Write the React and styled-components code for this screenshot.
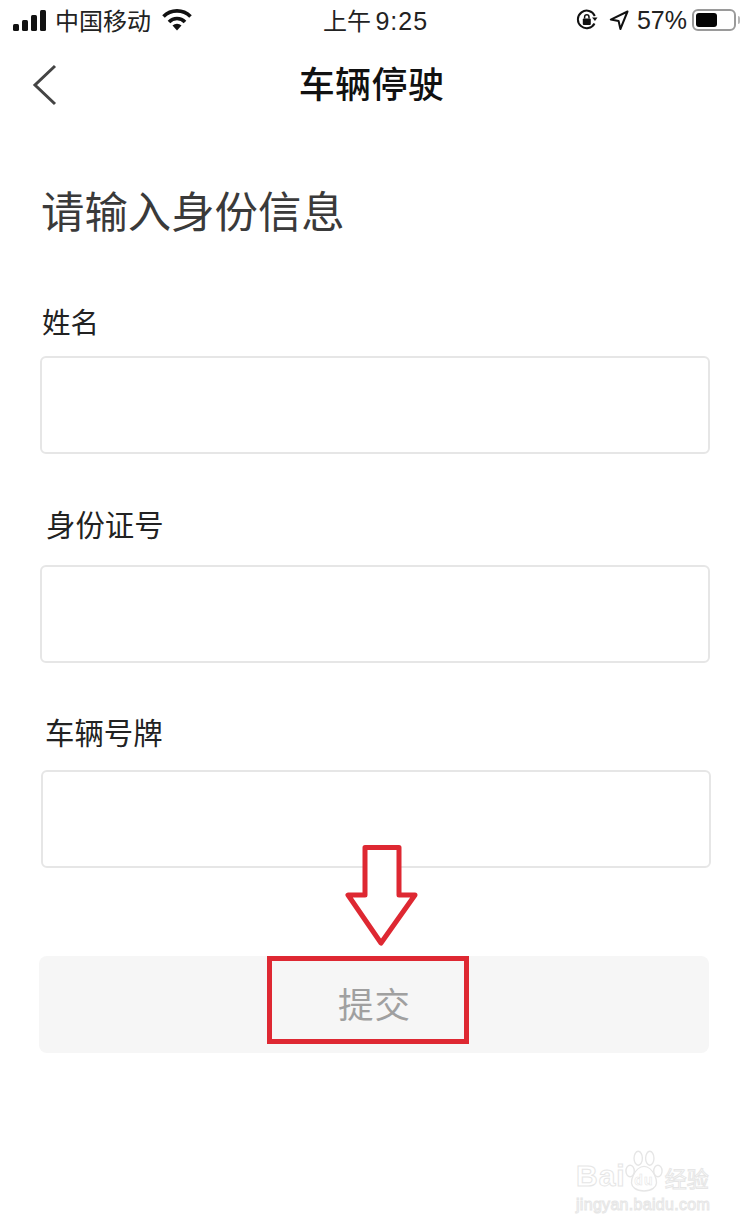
import React from "react";
import styled, { createGlobalStyle } from "styled-components";

const CJK = `"Noto Sans CJK SC", "Liberation Sans", sans-serif`;

const Global = createGlobalStyle`
  html, body { margin: 0; padding: 0; background: #fff; }
  * { box-sizing: border-box; }
`;

const Page = styled.div`
  position: relative;
  width: 750px;
  height: 1228px;
  background: #fff;
  overflow: hidden;
  font-family: ${CJK};
  display: flex;
  flex-direction: column;
`;

const StatusBar = styled.div`
  height: 42px;
  padding: 0 0 2px 13px;
  display: grid;
  grid-template-columns: 310px 126px 1fr;
  align-items: center;
  color: #111;
`;

const StatusLeft = styled.div`
  display: flex;
  align-items: center;
`;

const StatusRight = styled.div`
  display: flex;
  align-items: center;
  justify-content: flex-end;
  padding-right: 10px;
`;

const Carrier = styled.span`
  font-size: 24px;
  line-height: 30px;
  margin-left: 8px;
  margin-right: 11px;
  color: #222;
`;

const Clock = styled.span`
  font-size: 24px;
  line-height: 30px;
  color: #222;
  word-spacing: -1px;
  white-space: nowrap;
`;

const ClockDigits = styled.span`
  font-family: "Liberation Sans", sans-serif;
  font-size: 25px;
  letter-spacing: 1px;
`;

const Percent = styled.span`
  font-family: "Liberation Sans", sans-serif;
  font-size: 25px;
  line-height: 30px;
  color: #222;
  margin: 0 5px 0 8px;
`;

const Battery = styled.div`
  width: 44px;
  height: 22px;
  border: 2px solid #9a9a9a;
  border-radius: 6px;
  padding: 2px;
  margin-right: 2px;
`;

const BatteryFill = styled.div`
  width: 58%;
  height: 100%;
  background: #050505;
  border-radius: 3px;
`;

const BatteryCap = styled.div`
  width: 2px;
  height: 8px;
  background: #b5b5b5;
  border-radius: 0 2px 2px 0;
`;

const NavBar = styled.div`
  position: relative;
  height: 86px;
  padding: 0 7px 6px 0;
  display: flex;
  align-items: center;
  justify-content: center;
`;

const BackIcon = styled.svg`
  position: absolute;
  left: 31px;
  top: 22px;
`;

const NavTitle = styled.h1`
  margin: 0;
  font-size: 36px;
  line-height: 44px;
  font-weight: 500;
  letter-spacing: 0.4px;
  color: #111;
`;

const Form = styled.div`
  display: flex;
  flex-direction: column;
  padding-top: 52px;
`;

const Heading = styled.h2`
  margin: 0 0 0 41px;
  font-size: 43.4px;
  line-height: 58px;
  font-weight: 400;
  color: #3a3a3a;
`;

const Label = styled.label`
  display: block;
  margin-left: ${(p) => p.$x}px;
  margin-top: ${(p) => p.$top}px;
  font-size: ${(p) => p.$size}px;
  line-height: 40px;
  color: #222;
`;

const Field = styled.div`
  margin-left: ${(p) => p.$x}px;
  margin-top: ${(p) => p.$top}px;
  width: 670px;
  height: 98px;
  border: 2px solid #e6e6e6;
  border-radius: 6px;
  background: #fff;
`;

const Submit = styled.button`
  display: flex;
  align-items: center;
  justify-content: center;
  margin-left: 39px;
  margin-top: 88px;
  width: 670px;
  height: 97px;
  border: 0;
  border-radius: 8px;
  background: #f6f6f6;
  color: #a0a0a0;
  font-family: ${CJK};
  font-size: 35.5px;
  letter-spacing: 1px;
  padding: 0 0 4px 1px;
`;

const Highlight = styled.div`
  position: absolute;
  left: 267px;
  top: 956px;
  width: 202px;
  height: 88px;
  border: 5px solid #de2832;
`;

const Arrow = styled.svg`
  position: absolute;
  left: 340px;
  top: 840px;
`;

const Watermark = styled.div`
  position: absolute;
  left: 576px;
  top: 1149px;
  width: 140px;
  color: #fff;
  -webkit-text-stroke: 1px #e6e6e6;
  font-family: "Liberation Sans", sans-serif;
`;

const WmTop = styled.div`
  display: flex;
  align-items: flex-end;
  height: 44px;
  font-size: 30px;
  line-height: 34px;
  font-weight: 700;
  letter-spacing: 1px;
`;

const WmCjk = styled.span`
  font-family: ${CJK};
  font-size: 22px;
  line-height: 32px;
  letter-spacing: 0;
  font-weight: 400;
  margin-left: 1px;
`;

const WmUrl = styled.div`
  font-size: 16px;
  line-height: 20px;
  margin-top: 2px;
  letter-spacing: 0.3px;
  white-space: nowrap;
`;

const Paw = styled.svg`
  flex: none;
  margin: 0 0 0 -2px;
`;

function Signal() {
  return (
    <svg width="34" height="21" viewBox="0 0 34 21">
      <rect x="0" y="14" width="6" height="7" rx="1.5" fill="#111" />
      <rect x="9" y="10" width="6" height="11" rx="1.5" fill="#111" />
      <rect x="18" y="5" width="6" height="16" rx="1.5" fill="#111" />
      <rect x="27" y="0" width="6" height="21" rx="1.5" fill="#111" />
    </svg>
  );
}

function Wifi() {
  return (
    <svg width="30" height="22" viewBox="0 0 30 22">
      <path d="M1.5 7.5 A19 19 0 0 1 28.5 7.5" fill="none" stroke="#111" strokeWidth="3.6" />
      <path d="M7 13 A11 11 0 0 1 23 13" fill="none" stroke="#111" strokeWidth="3.6" />
      <path d="M10.5 16.5 A6.5 6.5 0 0 1 19.5 16.5 L15 21.5 Z" fill="#111" />
    </svg>
  );
}

function RotationLock() {
  return (
    <svg width="22" height="22" viewBox="0 0 22 22">
      <path d="M18.5 14.5 A8.8 8.8 0 1 1 18.8 7" fill="none" stroke="#111" strokeWidth="2" />
      <path d="M16 8.5 L21.5 8.5 L19 12 Z" fill="#111" />
      <rect x="6.8" y="9.5" width="8" height="6.5" rx="1" fill="#111" />
      <path d="M8.6 9.5 V8 a2.2 2.2 0 0 1 4.4 0 V9.5" fill="none" stroke="#111" strokeWidth="1.5" />
    </svg>
  );
}

function Location() {
  return (
    <svg width="20" height="21" viewBox="0 0 20 21" style={{ marginLeft: 11 }}>
      <path d="M18.5 1.5 L1.8 9.6 L9.6 11 L11.4 19 Z" fill="none" stroke="#111" strokeWidth="2" strokeLinejoin="round" />
    </svg>
  );
}

export default function App() {
  return (
    <Page>
      <Global />
      <StatusBar>
        <StatusLeft>
          <Signal />
          <Carrier>中国移动</Carrier>
          <Wifi />
        </StatusLeft>
        <Clock>上午 <ClockDigits>9:25</ClockDigits></Clock>
        <StatusRight>
          <RotationLock />
          <Location />
          <Percent>57%</Percent>
          <Battery>
            <BatteryFill />
          </Battery>
          <BatteryCap />
        </StatusRight>
      </StatusBar>
      <NavBar>
        <BackIcon width="28" height="42" viewBox="0 0 28 42">
          <path d="M24 2 L4 21 L24 40" fill="none" stroke="#444" strokeWidth="3" />
        </BackIcon>
        <NavTitle>车辆停驶</NavTitle>
      </NavBar>
      <Form>
        <Heading>请输入身份信息</Heading>
        <Label $x={42} $top={63} $size={28.5}>姓名</Label>
        <Field $x={40} $top={15} />
        <Label $x={46} $top={49} $size={29.4}>身份证号</Label>
        <Field $x={40} $top={22} />
        <Label $x={45} $top={48} $size={29.4}>车辆号牌</Label>
        <Field $x={41} $top={19} />
        <Submit>提交</Submit>
      </Form>
      <Arrow width="80" height="110" viewBox="0 0 80 110">
        <path
          d="M25 7.5 H59 V55 H75 L41 103 L8 55 H25 Z"
          fill="#fff"
          stroke="#de2832"
          strokeWidth="5"
          strokeLinejoin="round"
        />
      </Arrow>
      <Highlight />
      <Watermark>
        <WmTop>
          <span>Bai</span>
          <Paw width="40" height="44" viewBox="0 0 34 38">
            <g fill="none" stroke="#e6e6e6" strokeWidth="1.2">
              <ellipse cx="5" cy="19" rx="3.6" ry="5" />
              <ellipse cx="12" cy="8" rx="3.6" ry="6" />
              <ellipse cx="22" cy="8" rx="3.6" ry="6" />
              <ellipse cx="29" cy="19" rx="3.6" ry="5" />
              <path d="M17 15 C24 15 32 29 25 34 C21 37 13 37 9 34 C2 29 10 15 17 15 Z" />
            </g>
            <text x="17" y="31" fontSize="12" textAnchor="middle" fill="#fff" stroke="#e6e6e6" strokeWidth="0.5">du</text>
          </Paw>
          <WmCjk>经验</WmCjk>
        </WmTop>
        <WmUrl>jingyan.baidu.com</WmUrl>
      </Watermark>
    </Page>
  );
}
